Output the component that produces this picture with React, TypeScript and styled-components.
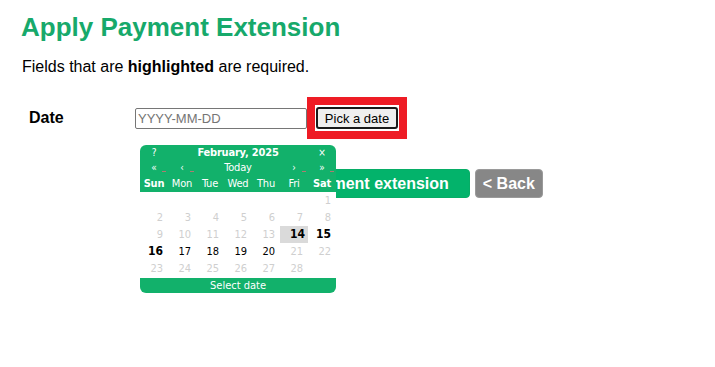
import React from "react";
import styled, { createGlobalStyle } from "styled-components";

const GlobalStyle = createGlobalStyle`
  html, body { margin: 0; padding: 0; background: #ffffff; }
  body { font-family: "Liberation Sans", Arial, sans-serif; color: #000; }
  * { box-sizing: border-box; }
`;

const GREEN = "#12b16b";

const Page = styled.div`
  position: relative;
  width: 715px;
  height: 367px;
  padding: 12px 0 0 21px;
`;

const Title = styled.h1`
  margin: 0;
  font-size: 26px;
  line-height: 30px;
  font-weight: bold;
  color: #17a96b;
`;

const Note = styled.p`
  margin: 16px 0 0 1px;
  font-size: 16px;
  line-height: 18px;
`;

const FormRow = styled.div`
  display: flex;
  align-items: center;
  height: 42px;
  margin-top: 21px;
`;

const Label = styled.label`
  width: 114px;
  padding-left: 8px;
  font-size: 16px;
  font-weight: bold;
`;

const DateInput = styled.input`
  width: 172px;
  height: 21px;
  margin-top: 1px;
  border: 1px solid #767676;
  border-radius: 2px;
  padding: 0 2px;
  font-family: "Liberation Sans", Arial, sans-serif;
  font-size: 13px;
  color: #000;
  &::placeholder { color: #757575; }
`;

const Highlight = styled.span`
  display: inline-flex;
  border: 8px solid #ee1c25;
  padding: 2px 1px;
  background: #fff;
`;

const PickButton = styled.button`
  height: 22px;
  width: 82px;
  padding: 0;
  border: 2px solid #1a1a1a;
  border-radius: 3px;
  background: #efefef;
  font-family: "Liberation Sans", Arial, sans-serif;
  font-size: 13px;
  color: #000;
`;

const ButtonRow = styled.div`
  display: flex;
  gap: 5px;
  margin-top: 30px;
  padding-left: 211px;
`;

const ActionButton = styled.button<{ $tone: "green" | "gray" }>`
  height: 29px;
  padding: ${(p) => (p.$tone === "green" ? "0 20px 0 22px" : "0 7px")};
  border: 1px solid ${(p) => (p.$tone === "green" ? "#07ad66" : "#9a9a9a")};
  border-radius: 4px;
  background: ${(p) => (p.$tone === "green" ? "#03b36b" : "#878787")};
  color: #fff;
  font-family: "Liberation Sans", Arial, sans-serif;
  font-size: 16px;
  font-weight: bold;
`;

/* ---------- calendar popup ---------- */

const Calendar = styled.div`
  position: absolute;
  left: 140px;
  top: 145px;
  width: 196px;
  font-family: "DejaVu Sans Condensed", "DejaVu Sans", Tahoma, sans-serif;
  font-stretch: condensed;
  font-size: 11px;
`;

const CalHead = styled.div`
  background: ${GREEN};
  color: #fff;
  border-radius: 6px 6px 0 0;
  display: grid;
  grid-template-columns: repeat(7, 28px);
`;

const HeadCell = styled.div<{ $span?: number; $h: number; $bold?: boolean; $small?: boolean }>`
  position: relative;
  grid-column: span ${(p) => p.$span ?? 1};
  height: ${(p) => p.$h}px;
  line-height: ${(p) => p.$h}px;
  text-align: center;
  white-space: nowrap;
  letter-spacing: -0.2px;
  font-weight: ${(p) => (p.$bold ? "bold" : "normal")};
  font-size: ${(p) => (p.$small ? "10px" : "11px")};
`;

const MenuMark = styled.span`
  position: absolute;
  right: 2px;
  bottom: 4px;
  width: 4px;
  height: 1px;
  background: #b07a70;
`;

const Body = styled.div`
  background: #fff;
  display: grid;
  grid-template-columns: repeat(7, 28px);
`;

const Day = styled.div<{ $state: "off" | "on" | "weekend" | "today" | "empty" }>`
  height: 17px;
  line-height: 17px;
  text-align: right;
  padding-right: ${(p) => (p.$state === "today" ? "3px" : "5px")};
  color: ${(p) => (p.$state === "off" ? "#cfcfcf" : "#000")};
  font-weight: ${(p) => (p.$state === "today" || p.$state === "weekend" ? "bold" : "normal")};
  font-size: ${(p) => (p.$state === "today" || p.$state === "weekend" ? "12px" : "11px")};
  background: ${(p) => (p.$state === "today" ? "#dadada" : "transparent")};
`;

const Footer = styled.div`
  margin-top: 1px;
  height: 15px;
  line-height: 15px;
  background: ${GREEN};
  color: #fff;
  text-align: center;
  border-radius: 0 0 6px 6px;
`;

type DayState = "off" | "on" | "weekend" | "today" | "empty";

const weeks: (number | null)[][] = [
  [null, null, null, null, null, null, 1],
  [2, 3, 4, 5, 6, 7, 8],
  [9, 10, 11, 12, 13, 14, 15],
  [16, 17, 18, 19, 20, 21, 22],
  [23, 24, 25, 26, 27, 28, null],
];

function stateOf(d: number | null, col: number): DayState {
  if (d === null) return "empty";
  if (d === 14) return "today";
  if (d >= 15 && d <= 20) return col === 0 || col === 6 ? "weekend" : "on";
  return "off";
}

const dayNames = ["Sun", "Mon", "Tue", "Wed", "Thu", "Fri", "Sat"];

export default function App() {
  return (
    <>
      <GlobalStyle />
      <Page>
        <Title>Apply Payment Extension</Title>
        <Note>
          Fields that are <b>highlighted</b> are required.
        </Note>
        <FormRow>
          <Label>Date</Label>
          <DateInput placeholder="YYYY-MM-DD" />
          <Highlight>
            <PickButton>Pick a date</PickButton>
          </Highlight>
        </FormRow>
        <ButtonRow>
          <ActionButton $tone="green">Apply payment extension</ActionButton>
          <ActionButton $tone="gray">&lt; Back</ActionButton>
        </ButtonRow>

        <Calendar>
          <CalHead>
            <HeadCell $h={15} $small>?</HeadCell>
            <HeadCell $h={15} $span={5} $bold>February, 2025</HeadCell>
            <HeadCell $h={15} $small>×</HeadCell>

            <HeadCell $h={16} $small>«<MenuMark /></HeadCell>
            <HeadCell $h={16} $small>‹<MenuMark /></HeadCell>
            <HeadCell $h={16} $span={3}>Today</HeadCell>
            <HeadCell $h={16} $small>›<MenuMark /></HeadCell>
            <HeadCell $h={16} $small>»<MenuMark /></HeadCell>

            {dayNames.map((n, i) => (
              <HeadCell key={n} $h={16} $bold={i === 0 || i === 6}>
                {n}
              </HeadCell>
            ))}
          </CalHead>
          <Body>
            {weeks.flatMap((w, wi) =>
              w.map((d, ci) => (
                <Day key={`${wi}-${ci}`} $state={stateOf(d, ci)}>
                  {d ?? ""}
                </Day>
              ))
            )}
          </Body>
          <Footer>Select date</Footer>
        </Calendar>
      </Page>
    </>
  );
}
